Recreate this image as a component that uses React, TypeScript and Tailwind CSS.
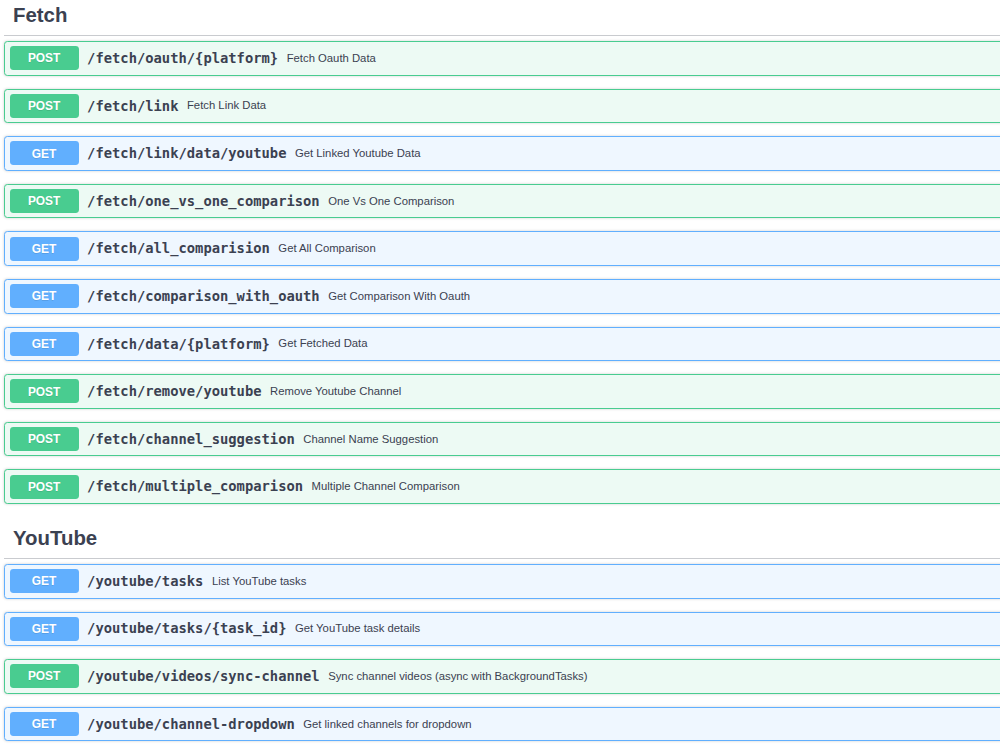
type Op = { method: 'GET' | 'POST'; path: string; summary: string }

const sections: { name: string; ops: Op[] }[] = [
  {
    name: 'Fetch',
    ops: [
      { method: 'POST', path: '/fetch/oauth/{platform}', summary: 'Fetch Oauth Data' },
      { method: 'POST', path: '/fetch/link', summary: 'Fetch Link Data' },
      { method: 'GET', path: '/fetch/link/data/youtube', summary: 'Get Linked Youtube Data' },
      { method: 'POST', path: '/fetch/one_vs_one_comparison', summary: 'One Vs One Comparison' },
      { method: 'GET', path: '/fetch/all_comparision', summary: 'Get All Comparison' },
      { method: 'GET', path: '/fetch/comparison_with_oauth', summary: 'Get Comparison With Oauth' },
      { method: 'GET', path: '/fetch/data/{platform}', summary: 'Get Fetched Data' },
      { method: 'POST', path: '/fetch/remove/youtube', summary: 'Remove Youtube Channel' },
      { method: 'POST', path: '/fetch/channel_suggestion', summary: 'Channel Name Suggestion' },
      { method: 'POST', path: '/fetch/multiple_comparison', summary: 'Multiple Channel Comparison' },
    ],
  },
  {
    name: 'YouTube',
    ops: [
      { method: 'GET', path: '/youtube/tasks', summary: 'List YouTube tasks' },
      { method: 'GET', path: '/youtube/tasks/{task_id}', summary: 'Get YouTube task details' },
      { method: 'POST', path: '/youtube/videos/sync-channel', summary: 'Sync channel videos (async with BackgroundTasks)' },
      { method: 'GET', path: '/youtube/channel-dropdown', summary: 'Get linked channels for dropdown' },
    ],
  },
]

function OpBlock({ method, path, summary }: Op) {
  const post = method === 'POST'
  return (
    <div
      className={`mb-[13px] flex h-[34.6px] items-center rounded-[3.4px] border px-[4.6px] shadow-[0_0_3px_rgba(0,0,0,0.19)] ${
        post ? 'border-[#49cc90] bg-[#edfaf4]' : 'border-[#61affe] bg-[#eff7ff]'
      }`}
    >
      <div
        className={`flex h-[24px] w-[69px] items-center justify-center rounded-[3.4px] pt-[2px] text-[11.9px] font-bold text-white [text-shadow:0_1px_0_rgba(0,0,0,0.1)] ${
          post ? 'bg-[#49cc90]' : 'bg-[#61affe]'
        }`}
      >
        {method}
      </div>
      <span className="px-[8.5px] font-['DejaVu_Sans_Mono',monospace] text-[13.8px] font-bold text-[#3b4151]">
        {path}
      </span>
      <span className="text-[11.3px] text-[#3b4151]">{summary}</span>
    </div>
  )
}

export default function App() {
  return (
    <div className="h-[750px] w-[1000px] overflow-hidden bg-white font-['Liberation_Sans',Arial,sans-serif]">
      <div className="w-[1100px] pl-[4px]">
        {sections.map((s, i) => (
          <div key={s.name} className={i > 0 ? 'pt-[6px]' : ''}>
            <h3 className="mb-[5px] h-[36px] border-b border-[#c9cbcf] pl-[9px] text-[20.4px] font-bold text-[#3b4151]">
              {s.name}
            </h3>
            {s.ops.map((op) => (
              <OpBlock key={op.path} {...op} />
            ))}
          </div>
        ))}
      </div>
    </div>
  )
}
